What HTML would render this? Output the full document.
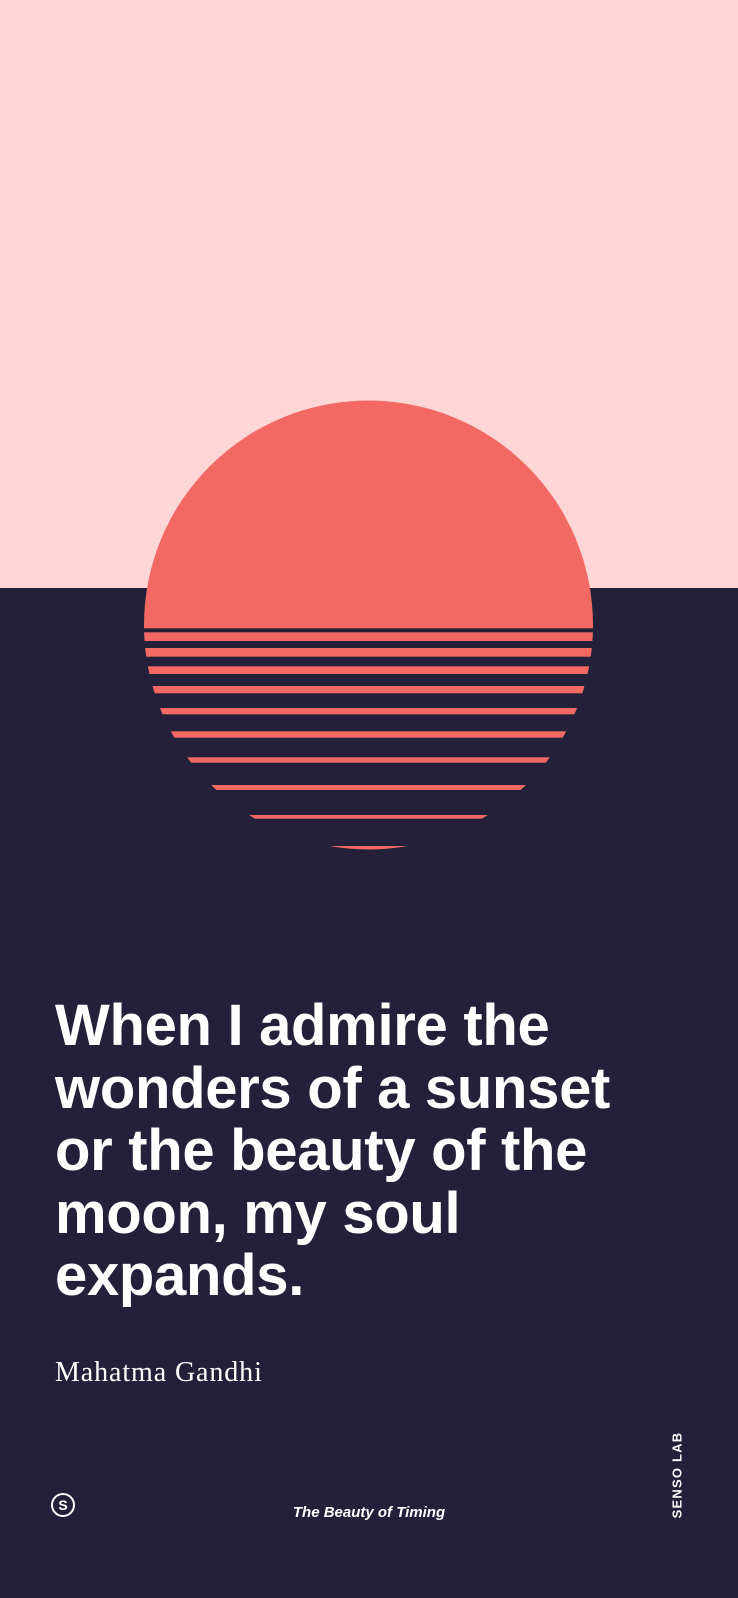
<!DOCTYPE html>
<html><head><meta charset="utf-8"><style>
html,body{margin:0;padding:0}
body{width:738px;height:1598px;position:relative;overflow:hidden;background:#252039;font-family:"Liberation Sans",sans-serif}
.pink{position:absolute;left:0;top:0;width:738px;height:588px;background:#FFD6D6}
svg.sun{position:absolute;left:0;top:0}
.quote{position:absolute;left:55px;top:995px;color:#fff;font-weight:bold;font-size:58px;line-height:62.5px;white-space:nowrap;letter-spacing:-0.3px}
.author{position:absolute;left:55px;top:1356px;color:#fff;font-family:"Liberation Serif",serif;font-size:28px;line-height:34px;letter-spacing:0.9px}
.title{position:absolute;left:0;width:738px;text-align:center;top:1503px;color:#fff;font-style:italic;font-weight:bold;font-size:15px;line-height:20px}
.logo{position:absolute;left:51px;top:1493px;width:20px;height:20px;border:2px solid #fff;border-radius:50%;color:#fff;font-weight:bold;font-size:14px;line-height:20px;text-align:center}
.senso{position:absolute;left:677px;top:1475px;transform:translate(-50%,-50%) rotate(-90deg);color:#fff;font-weight:bold;font-size:13px;letter-spacing:1.2px;white-space:nowrap}
</style></head><body>
<div class="pink"></div>
<svg class="sun" width="738" height="900" viewBox="0 0 738 900">
<defs><clipPath id="c"><circle cx="368.5" cy="625" r="224.5"/></clipPath></defs>
<g clip-path="url(#c)" fill="#F26963">
<rect x="0" y="380" width="738" height="248.3"/>
<rect x="0" y="632.3" width="738" height="8.7"/>
<rect x="0" y="648" width="738" height="8.7"/>
<rect x="0" y="666.3" width="738" height="7.7"/>
<rect x="0" y="686" width="738" height="7.3"/>
<rect x="0" y="708" width="738" height="6.3"/>
<rect x="0" y="731.3" width="738" height="6.4"/>
<rect x="0" y="757.3" width="738" height="5.4"/>
<rect x="0" y="785" width="738" height="5"/>
<rect x="0" y="815" width="738" height="3.7"/>
<rect x="0" y="846" width="738" height="5"/>
</g>
</svg>
<div class="quote">When I admire the<br>wonders of a sunset<br>or the beauty of the<br>moon, my soul<br>expands.</div>
<div class="author">Mahatma Gandhi</div>
<div class="logo">S</div>
<div class="title">The Beauty of Timing</div>
<div class="senso">SENSO LAB</div>
</body></html>
